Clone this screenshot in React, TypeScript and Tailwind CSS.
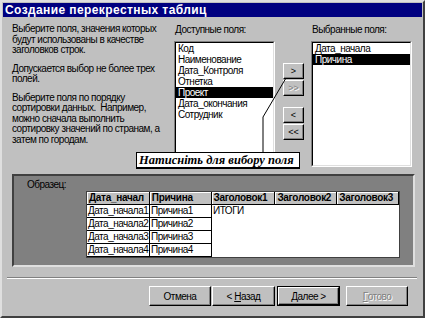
import React from 'react';

const leftItems = ['Код', 'Наименование', 'Дата_Контроля', 'Отнетка', 'Проект', 'Дата_окончания', 'Сотрудник'];
const rightItems = ['Дата_начала', 'Причина'];
const rows = [1, 2, 3, 4];

function ListBox({ items, selected }: { items: string[]; selected: string }) {
  return (
    <div className="h-[126px] w-[101px] border border-t-[#808080] border-l-[#808080] border-r-white border-b-white">
      <div className="h-full w-full border border-t-black border-l-black border-r-[#dfdfdf] border-b-[#dfdfdf] bg-white">
        {items.map(item => (
          <div
            key={item}
            className={`h-[11px] pl-[2px] leading-[11px] whitespace-nowrap ${
              item === selected ? 'bg-black text-white' : 'text-black'
            }`}
          >
            {item}
          </div>
        ))}
      </div>
    </div>
  );
}

function ArrowButton({ label, disabled, className }: { label: string; disabled?: boolean; className?: string }) {
  return (
    <div
      className={`flex h-[16px] w-[21px] items-center justify-center border border-t-white border-l-white border-r-black border-b-black bg-[#c0c0c0] text-[9px] leading-none tracking-normal shadow-[inset_-1px_-1px_0_#808080] ${
        disabled ? 'text-[#808080] [text-shadow:1px_1px_0_#fff]' : 'text-black'
      } ${className ?? ''}`}
    >
      {label}
    </div>
  );
}

function DialogButton({
  children,
  width,
  isDefault,
  disabled,
}: {
  children: React.ReactNode;
  width: string;
  isDefault?: boolean;
  disabled?: boolean;
}) {
  return (
    <div className={`h-[20px] ${width} ${isDefault ? 'border border-black' : ''}`}>
      <div
        className={`flex h-full w-full items-center justify-center border border-t-white border-l-white border-r-black border-b-black bg-[#c0c0c0] shadow-[inset_-1px_-1px_0_#808080] ${
          disabled ? 'text-[#808080] [text-shadow:1px_1px_0_#fff]' : 'text-black'
        }`}
      >
        {children}
      </div>
    </div>
  );
}

export default function App() {
  return (
    <div className="relative h-[318px] w-[425px] overflow-hidden border-2 border-t-[#dfdfdf] border-l-[#dfdfdf] border-r-[#404040] border-b-[#404040] bg-[#c0c0c0] p-[1px] font-['Liberation_Sans',Arial,sans-serif] text-[10px] tracking-[-0.5px] text-black">
      {/* title bar */}
      <div className="h-[14px] bg-[#000080] pl-[2px] text-[12px] leading-[14px] font-bold tracking-[0.4px] whitespace-nowrap text-white">
        Создание перекрестных таблиц
      </div>

      {/* top section */}
      <div className="flex pl-[9px] pt-[7px]">
        <div className="w-[152px] leading-[10.5px] whitespace-nowrap">
          <p>
            Выберите поля, значения которых
            <br />
            будут использованы в качестве
            <br />
            заголовков строк.
          </p>
          <p className="mt-[8px]">
            Допускается выбор не более трех
            <br />
            полей.
          </p>
          <p className="mt-[8px]">
            Выберите поля по порядку
            <br />
            сортировки данных.&nbsp; Например,
            <br />
            можно сначала выполнить
            <br />
            сортировку значений по странам, а
            <br />
            затем по городам.
          </p>
        </div>

        <div className="ml-[10px] flex flex-col">
          <div className="h-[11px] pl-[1px] leading-[11px]">Доступные поля:</div>
          <div className="mt-[6px]">
            <ListBox items={leftItems} selected="Проект" />
          </div>
        </div>

        <div className="ml-[8px] flex flex-col pt-[39px]">
          <ArrowButton label=">" />
          <ArrowButton label=">>" disabled className="mt-[1px]" />
          <ArrowButton label="<" className="mt-[11px]" />
          <ArrowButton label="<<" className="mt-[1px]" />
        </div>

        <div className="ml-[7px] flex flex-col">
          <div className="h-[11px] pl-[1px] leading-[11px]">Выбранные поля:</div>
          <div className="mt-[6px]">
            <ListBox items={rightItems} selected="Причина" />
          </div>
        </div>
      </div>

      {/* sample */}
      <div className="ml-[9px] mt-[7px] h-[93px] w-[403px] border-2 border-t-[#404040] border-l-[#404040] border-r-[#dfdfdf] border-b-[#dfdfdf] bg-[#808080] pl-[13px] pt-[3px]">
        <div className="h-[11px] leading-[11px]">Образец:</div>
        <div className="ml-[59px] mt-[1px] w-[314px] border border-[#404040]">
          <div className="flex h-[13px] font-bold leading-[12px] tracking-[-0.3px]">
            {['Дата_начал', 'Причина', 'Заголовок1', 'Заголовок2', 'Заголовок3'].map((h, i) => (
              <div
                key={h}
                className={`overflow-hidden whitespace-nowrap border-r border-b border-black bg-[#c0c0c0] pl-[2px] shadow-[inset_1px_1px_0_#fff] ${
                  i === 2 ? 'w-[64px]' : i === 0 ? 'w-[63px]' : 'w-[62px]'
                }`}
              >
                {h}
              </div>
            ))}
          </div>
          <div className="flex bg-white">
            <div className="flex flex-col">
              {rows.map(n => (
                <div key={n} className="flex h-[13px] leading-[12px]">
                  <div className="w-[63px] overflow-hidden whitespace-nowrap border-r border-b border-black pl-[1px]">
                    Дата_начала{n}
                  </div>
                  <div className="w-[62px] overflow-hidden whitespace-nowrap border-r border-b border-black pl-[1px]">
                    Причина{n}
                  </div>
                </div>
              ))}
            </div>
            <div className="h-[52px] flex-1 pl-[1px] leading-[12px]">ИТОГИ</div>
          </div>
        </div>
      </div>

      {/* separator */}
      <div className="ml-[4px] mt-[10px] h-[2px] w-[410px] border-t border-b border-t-[#808080] border-b-white" />

      {/* buttons */}
      <div className="mt-[7px] flex pl-[146px]">
        <DialogButton width="w-[62px]">Отмена</DialogButton>
        <div className="ml-[1px]">
          <DialogButton width="w-[63px]">
            &lt;&nbsp;<span className="underline">Н</span>азад
          </DialogButton>
        </div>
        <div className="ml-[2px]">
          <DialogButton width="w-[63px]" isDefault>
            <span className="underline">Д</span>алее&nbsp;&gt;
          </DialogButton>
        </div>
        <div className="ml-[6px]">
          <DialogButton width="w-[62px]" disabled>
            <span className="underline">Г</span>отово
          </DialogButton>
        </div>
      </div>

      {/* callout */}
      <svg className="pointer-events-none absolute -left-[2px] -top-[2px]" width="425" height="318">
        <polyline points="263,152 263,117 286,78" fill="none" stroke="black" strokeWidth="1" />
      </svg>
      <div className="absolute left-[134px] top-[150px] h-[17px] w-[164px] border border-b-2 border-black bg-white pl-[2px] font-['Liberation_Serif','Times_New_Roman',serif] text-[12.5px] leading-[14px] font-bold italic tracking-normal whitespace-nowrap">
        Натисніть для вибору поля
      </div>
    </div>
  );
}
